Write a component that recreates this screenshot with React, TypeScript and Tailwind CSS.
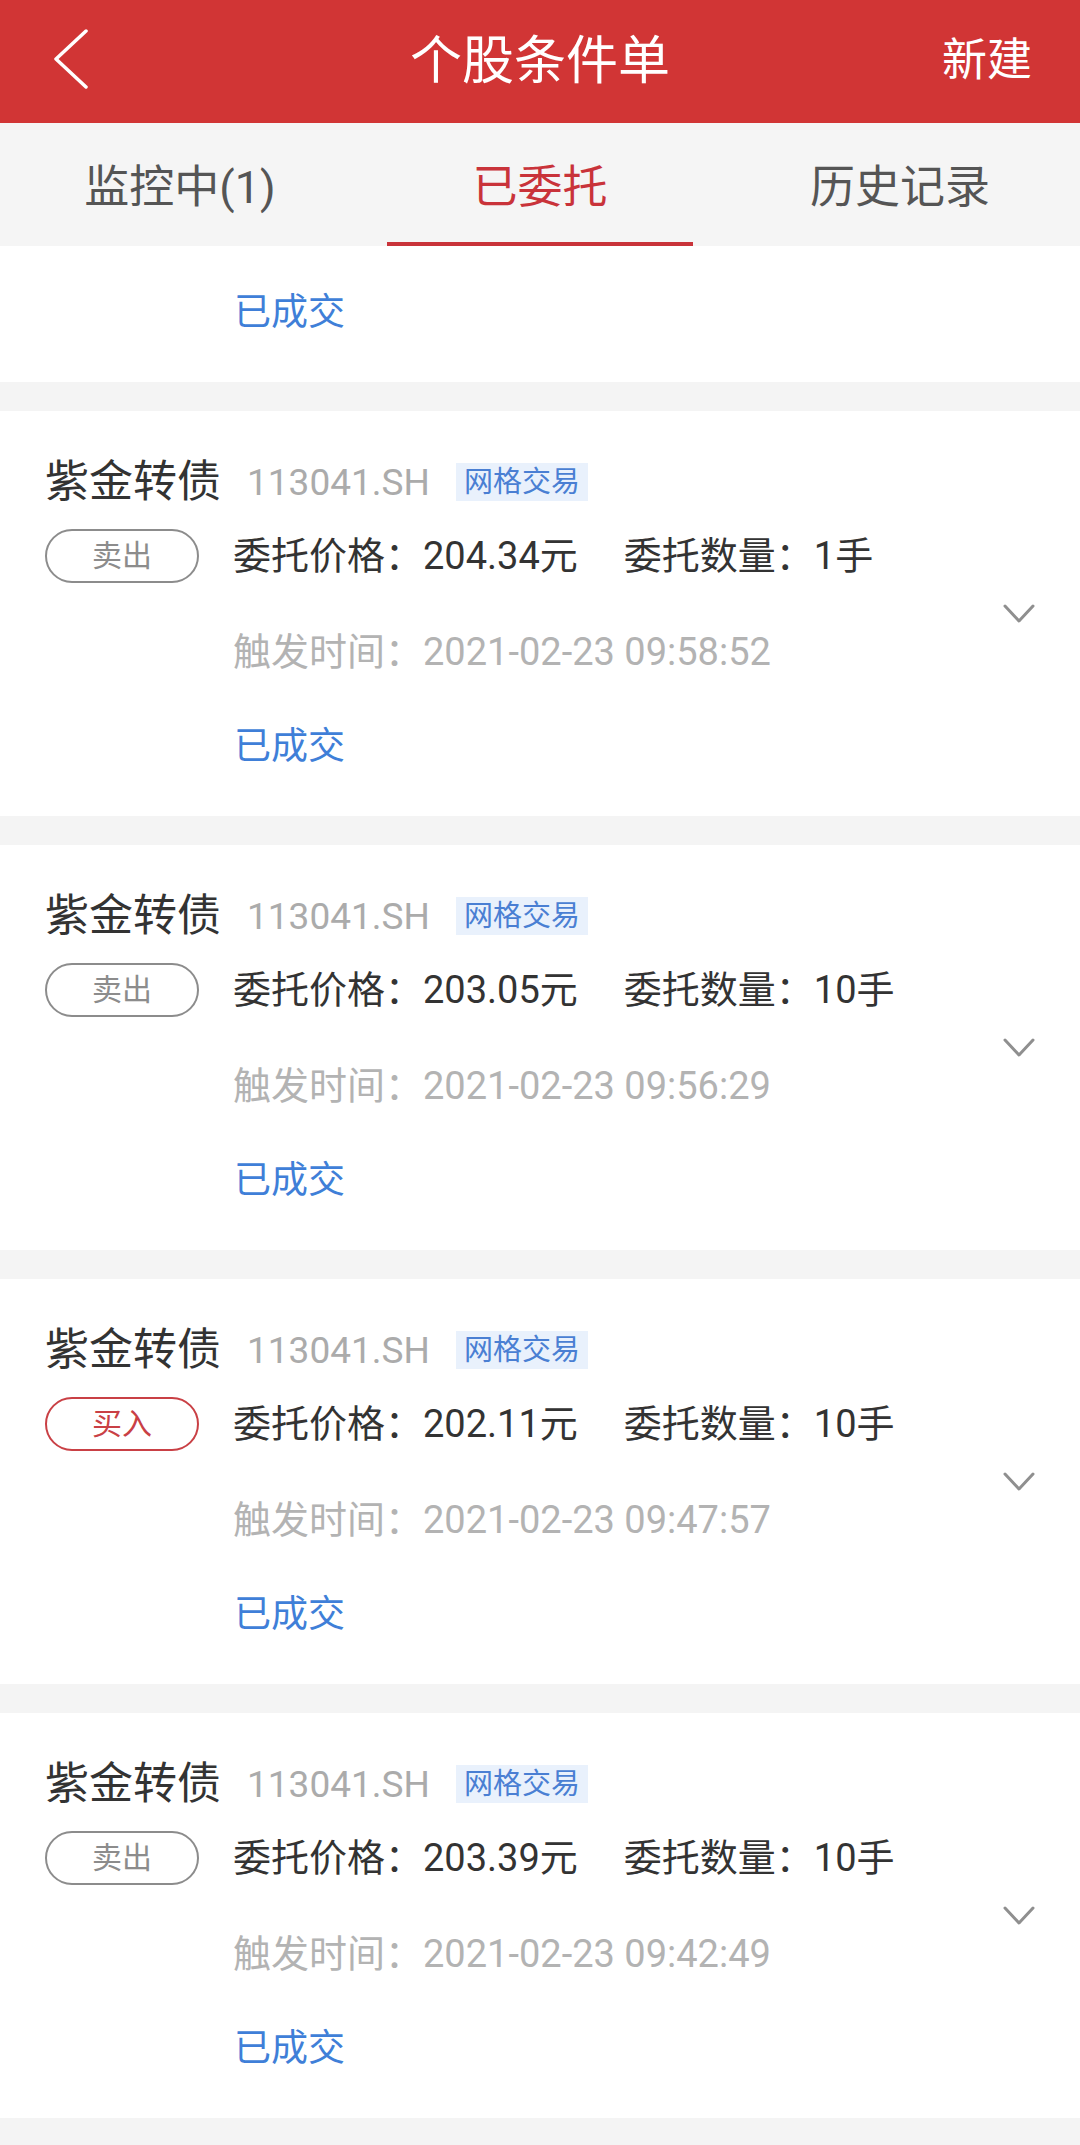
import React from "react";

type Order = {
  side: "sell" | "buy";
  price: string;
  qty: string;
  time: string;
};

const orders: Order[] = [
  { side: "sell", price: "204.34元", qty: "1手", time: "2021-02-23 09:58:52" },
  { side: "sell", price: "203.05元", qty: "10手", time: "2021-02-23 09:56:29" },
  { side: "buy", price: "202.11元", qty: "10手", time: "2021-02-23 09:47:57" },
  { side: "sell", price: "203.39元", qty: "10手", time: "2021-02-23 09:42:49" },
];

function ChevronDown() {
  return (
    <svg width="32" height="20" viewBox="0 0 32 20" fill="none">
      <polyline
        points="2,2 16,17 30,2"
        stroke="#8f8f8f"
        strokeWidth="3"
        strokeLinecap="round"
        strokeLinejoin="round"
      />
    </svg>
  );
}

function Card({ o }: { o: Order }) {
  const buy = o.side === "buy";
  return (
    <div className="flex h-[405px] items-center bg-white pl-[45px] pr-[45px]">
      <div className="flex flex-1 flex-col">
        <div className="mt-[41px] flex h-[60px] items-center">
          <span className="text-[44px] leading-none text-[#333333]">紫金转债</span>
          <span className="ml-[26px] text-[37px] leading-none text-[#ababab]">113041.SH</span>
          <span className="ml-[26px] flex h-[38px] items-center bg-[#e9f1fc] px-[8px] text-[29px] leading-none text-[#4a7fd3]">
            网格交易
          </span>
        </div>
        <div className="mt-[17px] flex h-[54px] items-center">
          <div
            className={
              buy
                ? "flex h-[54px] w-[154px] items-center justify-center rounded-full border-2 border-[#c94045] text-[30px] leading-none text-[#c94045]"
                : "flex h-[54px] w-[154px] items-center justify-center rounded-full border-2 border-[#8c8c8c] text-[30px] leading-none text-[#8c8c8c]"
            }
          >
            {buy ? "买入" : "卖出"}
          </div>
          <span className="ml-[34px] text-[38px] leading-none text-[#333333]">委托价格：{o.price}</span>
          <span className="ml-[46px] text-[38px] leading-none text-[#333333]">委托数量：{o.qty}</span>
        </div>
        <div className="mt-[44px] flex h-[50px] items-center pl-[188px]">
          <span className="text-[38px] leading-none text-[#b3b3b3]">触发时间：{o.time}</span>
        </div>
        <div className="mt-[44px] flex h-[50px] items-center pl-[189px]">
          <span className="text-[37px] leading-none text-[#3f7fd8]">已成交</span>
        </div>
        <div className="h-[45px]" />
      </div>
      <div className="flex items-center">
        <ChevronDown />
      </div>
    </div>
  );
}

export default function App() {
  return (
    <div className="flex min-h-[2145px] w-[1080px] flex-col overflow-hidden bg-[#f4f4f4] font-[Roboto,'Noto_Sans_CJK_SC',sans-serif]">
      <header className="relative flex h-[123px] items-center justify-center bg-[#d13535]">
        <div className="absolute left-[52px] top-[29px]">
          <svg width="36" height="60" viewBox="0 0 36 60" fill="none">
            <polyline
              points="34,2 4,30 34,58"
              stroke="#ffffff"
              strokeWidth="3.5"
              strokeLinecap="round"
              strokeLinejoin="round"
            />
          </svg>
        </div>
        <h1 className="text-[52px] leading-none text-white">个股条件单</h1>
        <span className="absolute right-[48px] top-[38px] text-[45px] leading-none text-white">新建</span>
      </header>

      <nav className="flex h-[123px] bg-[#f5f5f5]">
        <div className="flex flex-1 items-center justify-center pt-[6px] text-[45px] leading-none text-[#555555]">
          监控中(1)
        </div>
        <div className="relative flex flex-1 items-center justify-center pt-[6px] text-[45px] leading-none text-[#c9333a]">
          已委托
          <div className="absolute bottom-[0px] left-[27px] right-[27px] h-[4px] bg-[#c9333a]" />
        </div>
        <div className="flex flex-1 items-center justify-center pt-[6px] text-[45px] leading-none text-[#555555]">
          历史记录
        </div>
      </nav>

      <div className="flex flex-col gap-[29px]">
        <div className="flex h-[136px] flex-col bg-white pl-[45px]">
          <div className="mt-[41px] flex h-[50px] items-center pl-[189px]">
            <span className="text-[37px] leading-none text-[#3f7fd8]">已成交</span>
          </div>
        </div>
        {orders.map((o, i) => (
          <Card key={i} o={o} />
        ))}
      </div>
    </div>
  );
}
